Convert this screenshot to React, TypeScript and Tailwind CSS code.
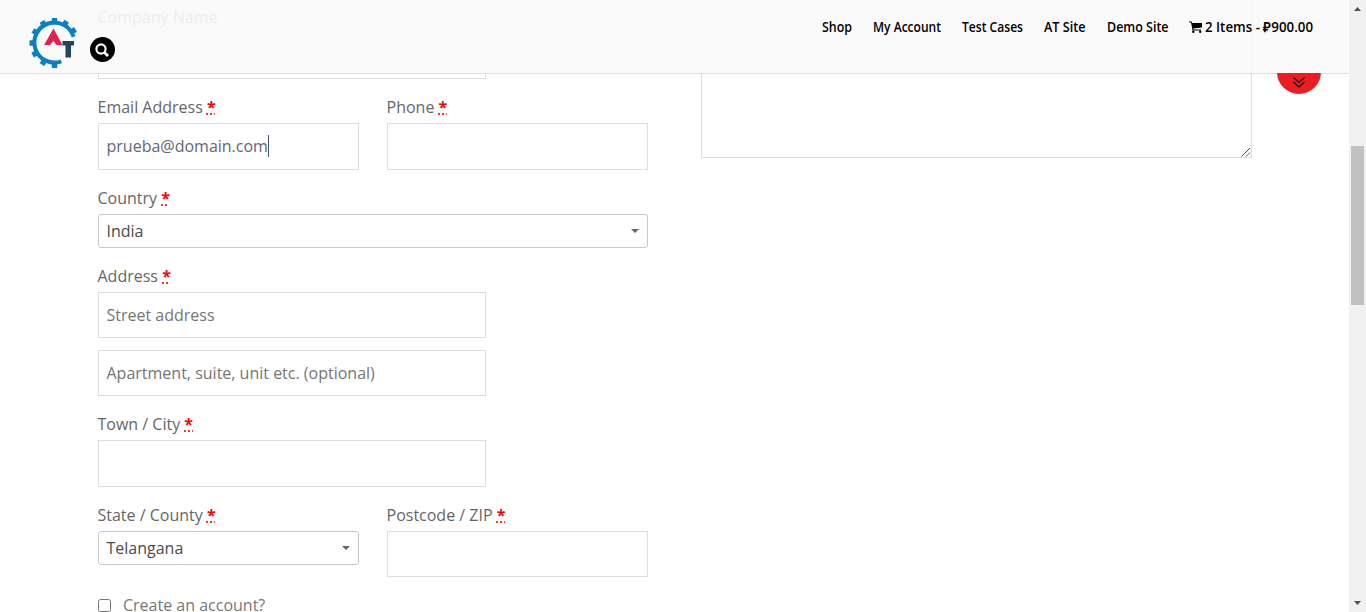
import type { ReactNode } from "react";

function Label({ children, required = true }: { children: ReactNode; required?: boolean }) {
  return (
    <div className="-ml-[0.5px] flex h-8 items-center whitespace-pre text-base leading-8 text-[#666]">
      {children}
      {required && (
        <span>
          {" "}
          <abbr title="required" className="font-bold text-[#f00] underline decoration-dotted">*</abbr>
        </span>
      )}
    </div>
  );
}

function Field({ className, children }: { className: string; children?: ReactNode }) {
  return (
    <div className={`flex items-center border border-[#ddd] pl-[7.5px] text-base ${className}`}>{children}</div>
  );
}

function Select({ className, children }: { className: string; children: ReactNode }) {
  return (
    <div className={`flex h-[34px] items-center justify-between rounded-[3px] border border-[#c8c8c8] pl-[7.5px] pr-2 text-base text-[#4a4a4a] ${className}`}>
      {children}
      <svg width="8" height="4" viewBox="0 0 8 4" className="-mt-px">
        <path d="M0 0h8L4 4z" fill="#666" />
      </svg>
    </div>
  );
}

const teeth = [-90, -61, -33, -120, -150, 180, 151, 120, 90];

function Logo() {
  return (
    <svg width="52" height="52" viewBox="0 0 52 52" className="shrink-0">
      <g transform="translate(26.5 26)" fill="#0a80c4">
        <path d="M19 -6.200A20 20 0 1 0 6.800 18.300" fill="none" stroke="#0a80c4" strokeWidth="4" />
        {teeth.map((a) => (
          <path key={a} d="M18.500-4.500L21.500-2.700H25V2.700H21.500L18.500 4.500z" transform={`rotate(${a})`} />
        ))}
      </g>
      <path d="M16 28L25.500 11.500L34.500 28H28.500L25.500 24L22 28z" fill="#e0234e" />
      <path d="M34.500 24H46V28.500H43V40.500H37.500V28.500H34.500z" fill="#23445c" />
    </svg>
  );
}

const links = [
  { label: "Shop", w: "w-[30px]", len: 30 },
  { label: "My Account", w: "w-[68px]", len: 68 },
  { label: "Test Cases", w: "w-[61px]", len: 61 },
  { label: "AT Site", w: "w-[41.5px]", len: 41.5 },
  { label: "Demo Site", w: "w-[61.5px]", len: 61.5 },
];

export default function App() {
  return (
    <div className="relative flex h-[612px] w-full overflow-hidden bg-white font-['Open_Sans',sans-serif]">
      <main className="flex flex-1 items-start gap-[53px] pl-[98px] pt-px">
        <form className="flex w-[550px] shrink-0 flex-col gap-3">
          <div>
            <Label required={false}>Company Name</Label>
            <Field className="h-[46px] w-[388px]" />
          </div>
          <div className="flex gap-7">
            <div>
              <Label>Email Address</Label>
              <Field className="h-[47px] w-[261px] pb-[2px] text-[#626678]">
                prueba@domain.com
                <span className="h-[22px] w-px bg-[#445068]" />
              </Field>
            </div>
            <div>
              <Label>Phone</Label>
              <Field className="h-[47px] w-[261px]" />
            </div>
          </div>
          <div>
            <Label>Country</Label>
            <Select className="w-[550px]">India</Select>
          </div>
          <div>
            <Label>Address</Label>
            <Field className="h-[46px] w-[388px] text-[#757575]">Street address</Field>
            <Field className="mt-3 h-[46px] w-[388px] text-[#757575]">Apartment, suite, unit etc. (optional)</Field>
          </div>
          <div>
            <Label>Town / City</Label>
            <Field className="h-[47px] w-[388px]" />
          </div>
          <div className="flex gap-7">
            <div>
              <Label>State / County</Label>
              <Select className="w-[261px]">Telangana</Select>
            </div>
            <div>
              <Label>Postcode / ZIP</Label>
              <Field className="h-[46px] w-[261px]" />
            </div>
          </div>
          <div className="flex h-8 items-center gap-3 text-base text-[#777]">
            <span className="h-[13px] w-[13px] rounded-[2.5px] border border-[#767676] bg-white" />
            Create an account?
          </div>
        </form>
        <div className="-mt-px flex h-[158px] w-[551px] shrink-0 items-end justify-end border border-t-0 border-[#ddd]">
          <svg width="10" height="10" viewBox="0 0 10 10">
            <path d="M0.500 9.500L9 1M5 9.500L9 5.500" stroke="#555" strokeWidth="1" />
          </svg>
        </div>
      </main>
      <aside className="flex w-[17px] shrink-0 flex-col items-center bg-[#f1f1f1]">
        <svg width="17" height="17" viewBox="0 0 17 17">
          <path d="M5 11h7L8.500 7z" fill="#505050" />
        </svg>
        <div className="mt-[129px] h-[159px] w-[13px] bg-[#c1c1c1]" />
        <svg width="17" height="17" viewBox="0 0 17 17" className="mt-auto">
          <path d="M5 6h7L8.500 10z" fill="#505050" />
        </svg>
      </aside>
      <header className="absolute left-0 top-0 flex h-[74px] w-[1349px] items-start justify-between border-b border-[#ddd] bg-[#fafafa]/90">
        <div className="relative flex items-start gap-[10px] pl-7 pt-[17px]">
          <Logo />
          <div className="mt-5 flex h-[25px] w-[25px] items-center justify-center rounded-full bg-black pr-[2px]">
            <svg width="14" height="14" viewBox="0 0 14 14" fill="none" stroke="#fff" strokeWidth="2.100">
              <circle cx="6" cy="6" r="4.600" />
              <path d="M9.200 9.200L13 13" strokeWidth="2.800" />
            </svg>
          </div>
        </div>
        <nav className="relative flex items-center gap-[21px] pr-9 pt-[17px] text-black">
          {links.map((l) => (
            <a key={l.label} className={`block h-5 ${l.w}`}>
              <svg width={l.len} height="20" className="overflow-visible text-[13.500px] font-semibold">
                <text x="0" y="15" fill="#000" textLength={l.len} lengthAdjust="spacingAndGlyphs">{l.label}</text>
              </svg>
            </a>
          ))}
          <a className="flex h-5 items-center gap-[3px]">
            <svg width="13" height="12" viewBox="0 0 13 12">
              <path d="M0 .5h2.700L3.100 2H13V6.500L4.400 7.600V8.500H12V9.500H3.300V7.800L2 1.500H0z" />
              <circle cx="4.300" cy="10.700" r="1.200" />
              <circle cx="11.200" cy="10.700" r="1.200" />
            </svg>
            <svg width="108" height="20" className="overflow-visible text-[13.500px] font-semibold">
              <text x="0" y="15" fill="#000" textLength="108" lengthAdjust="spacingAndGlyphs">2 Items - ₽900.00</text>
            </svg>
          </a>
        </nav>
      </header>
      <div className="absolute left-[1277px] top-[73px] flex h-[21px] w-11 items-end overflow-hidden">
        <div className="flex h-11 w-11 shrink-0 items-end justify-center rounded-full bg-[#ed1c24] pb-[6px]">
          <svg width="12" height="11" viewBox="0 0 12 11" fill="none" stroke="#111" strokeWidth="1.100">
            <path d="M0.500 0.500L6 5.500L11.500 0.500M0.500 5L6 10L11.500 5" />
          </svg>
        </div>
      </div>
    </div>
  );
}
